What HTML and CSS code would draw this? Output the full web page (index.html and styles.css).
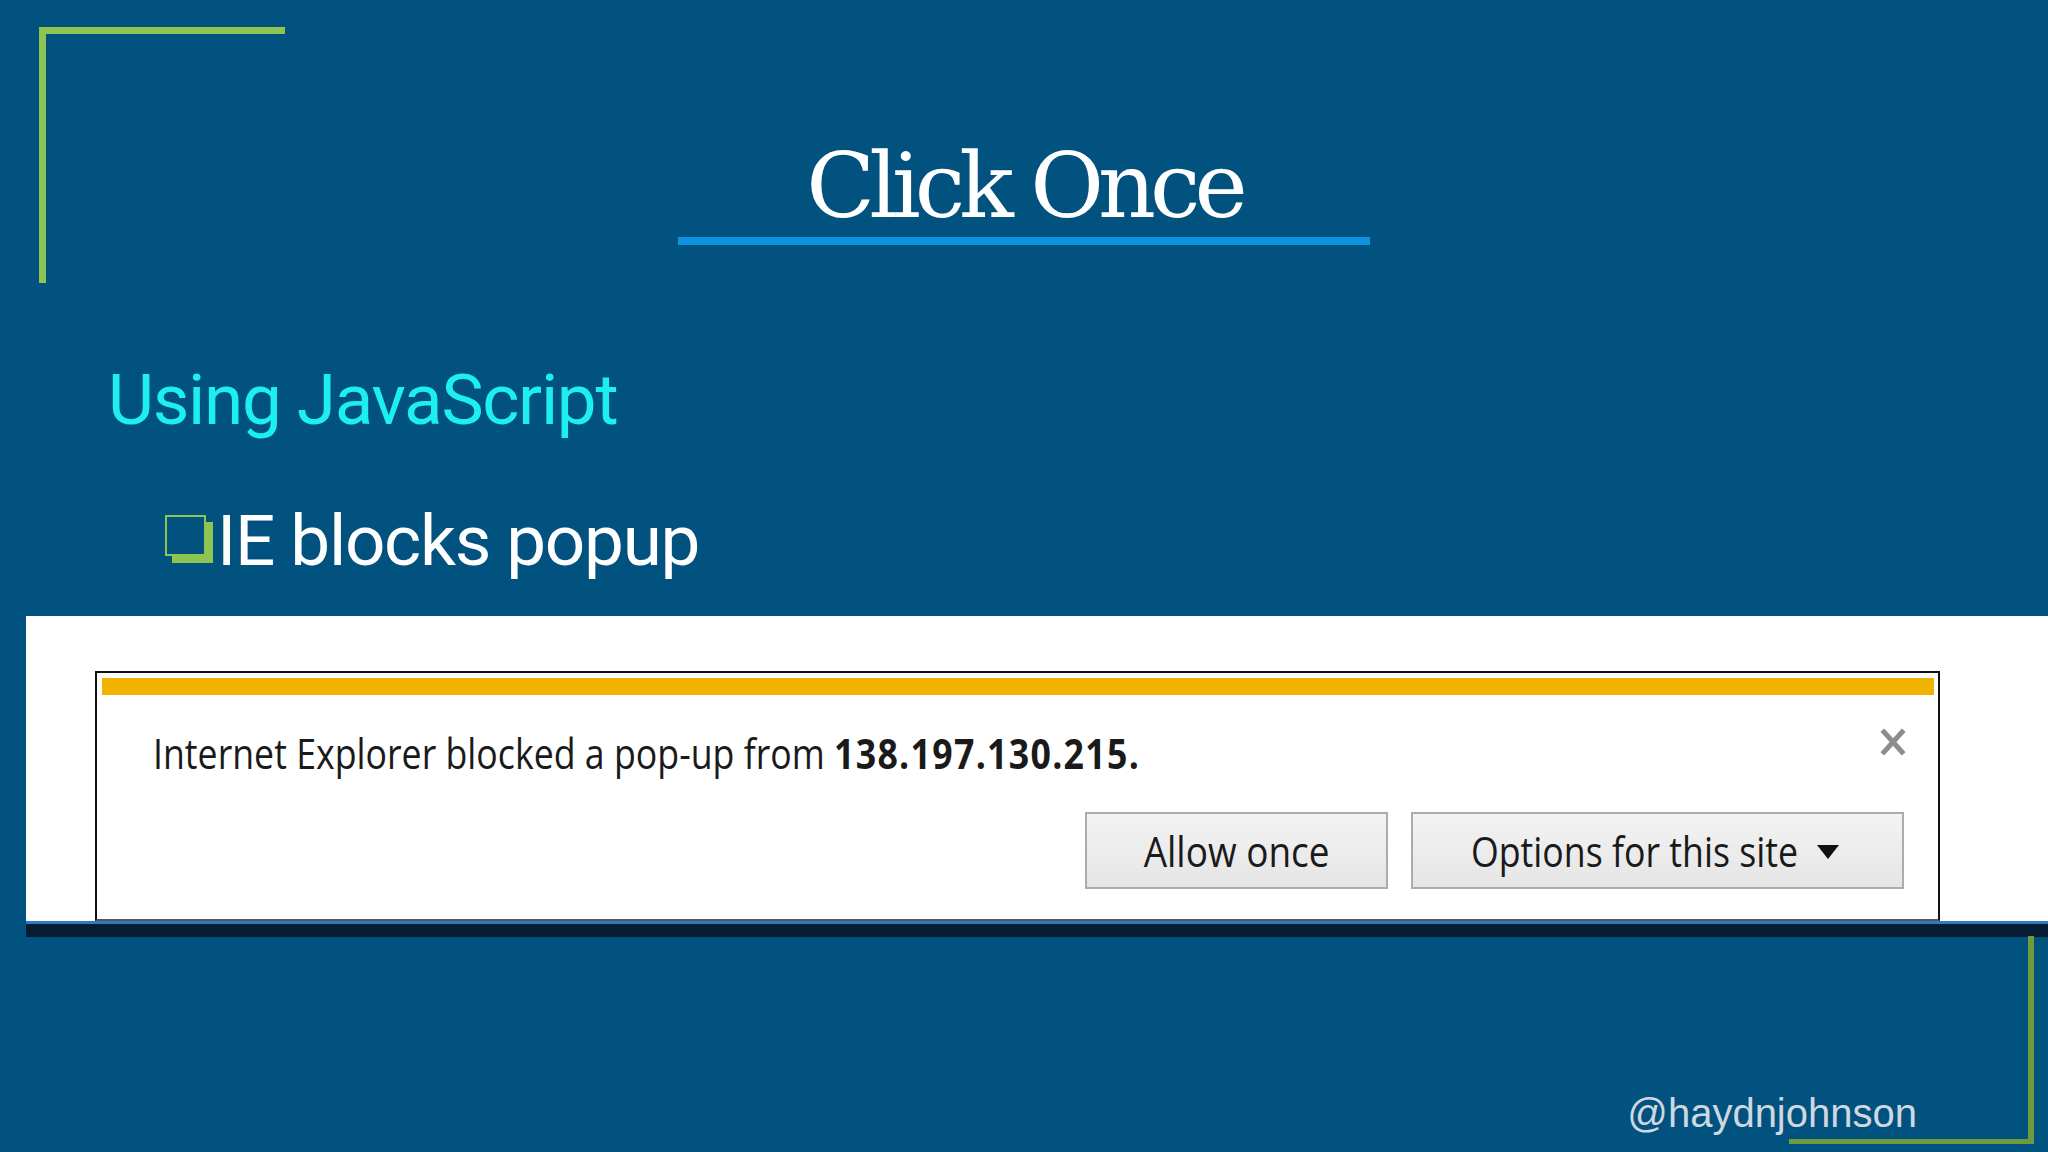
FILE: index.html
```html
<!DOCTYPE html>
<html>
<head>
    <link rel="stylesheet" href="styles.css">
</head>
<body>
    <div class="slide">
        <div class="corner corner-top"></div>

        <div class="title-block">
            <h1 class="title">Click Once</h1>
            <div class="title-rule"></div>
        </div>

        <h2 class="section">Using JavaScript</h2>

        <div class="bullet-row">
            <span class="bullet-box"></span>
            <span class="bullet-text">IE blocks popup</span>
        </div>

        <div class="shot">
            <div class="ie-bar">
                <div class="ie-stripe"></div>
                <div class="ie-body">
                    <div class="ie-message-row">
                        <div class="ie-message"><span class="narrow">Internet Explorer blocked a pop-up from <b>138.197.130.215.</b></span></div>
                        <svg class="ie-close" width="26" height="28" viewBox="0 0 26 28">
                            <path d="M4 4 L22 24 M22 4 L4 24" stroke="#8d8d8d" stroke-width="5" stroke-linecap="square"/>
                        </svg>
                    </div>
                    <div class="ie-actions">
                        <button class="ie-btn btn-allow" type="button"><span class="narrow">Allow once</span></button>
                        <button class="ie-btn btn-options" type="button">
                            <span class="narrow">Options for this site</span>
                            <svg class="caret" width="22" height="14" viewBox="0 0 22 14"><path d="M0 0 H22 L11 14 Z" fill="#111"/></svg>
                        </button>
                    </div>
                </div>
            </div>
        </div>
        <div class="shot-edge"></div>

        <div class="footer">
            <span class="handle">@haydnjohnson</span>
        </div>

        <div class="corner corner-bottom"></div>
    </div>
</body>
</html>
```

FILE: styles.css
```css
html, body {
    margin: 0;
    padding: 0;
}
body {
    background-color: #01527e;
    font-family: Roboto, 'Noto Sans', sans-serif;
    overflow: hidden;
}
.slide {
    position: relative;
    width: 2048px;
    height: 1152px;
    overflow: hidden;
}

/* green brackets */
.corner {
    position: absolute;
    box-sizing: border-box;
}
.corner-top {
    left: 39px;
    top: 27px;
    width: 246px;
    height: 256px;
    border-left: 7px solid #8cc552;
    border-top: 7px solid #8cc552;
}
.corner-bottom {
    right: 14px;
    top: 936px;
    width: 245px;
    height: 208px;
    border-right: 6px solid #6d9b3d;
    border-bottom: 5px solid #6d9b3d;
}

/* title */
.title-block {
    padding-top: 136px;
    display: flex;
    flex-direction: column;
    align-items: center;
}
.title {
    margin: 0;
    font-family: 'DejaVu Serif', 'Liberation Serif', serif;
    font-weight: normal;
    font-size: 90px;
    line-height: 100px;
    letter-spacing: -6px;
    color: #ffffff;
}
.title-rule {
    width: 692px;
    height: 8px;
    margin-top: 1px;
    background-color: #0d95de;
}

.section {
    margin: 113px 0 0 108px;
    font-weight: normal;
    font-size: 71px;
    line-height: 84px;
    letter-spacing: -1.3px;
    color: #1deef0;
}

.bullet-row {
    display: flex;
    align-items: flex-start;
    margin: 57px 0 0 165px;
}
.bullet-box {
    width: 41px;
    height: 41px;
    margin-top: 16px;
    box-sizing: border-box;
    border: 2px solid #8cc552;
    box-shadow: 7px 7px 0 #8cc552;
}
.bullet-text {
    margin-left: 11px;
    font-size: 71px;
    line-height: 84px;
    letter-spacing: -1.3px;
    color: #ffffff;
}

/* screenshot of the IE notification */
.shot {
    margin: 33px 0 0 26px;
    height: 305px;
    padding: 55px 108px 0 69px;
    box-sizing: border-box;
    background-color: #ffffff;
}
.shot-edge {
    margin-left: 26px;
    height: 16px;
    box-sizing: border-box;
    border-top: 3px solid #2b7cc4;
    background-color: #071d33;
}
.ie-bar {
    height: 250px;
    box-sizing: border-box;
    border: 2px solid #111111;
    border-bottom-color: #555555;
    padding: 5px 4px 0 5px;
    background-color: #ffffff;
    font-family: 'Open Sans', 'Noto Sans', sans-serif;
    color: #1a1a1a;
}
.ie-stripe {
    height: 17px;
    background-color: #f2b200;
}
.ie-body {
    padding: 33px 30px 0 51px;
}
.ie-message-row {
    display: flex;
    justify-content: space-between;
    align-items: flex-start;
}
.ie-message {
    font-size: 42px;
    line-height: 50px;
    white-space: nowrap;
}
.ie-message b {
    letter-spacing: 1.5px;
}
.narrow {
    display: inline-block;
    transform: scaleX(0.85);
    transform-origin: left center;
    white-space: nowrap;
}
.ie-close {
    margin-right: -2px;
}
.ie-actions {
    display: flex;
    justify-content: flex-end;
    gap: 23px;
    margin-top: 34px;
}
.ie-btn {
    height: 77px;
    box-sizing: border-box;
    border: 2px solid #acacac;
    background: linear-gradient(#f3f3f3, #e5e5e5);
    font-family: 'Open Sans', 'Noto Sans', sans-serif;
    font-size: 42px;
    color: #1a1a1a;
    display: flex;
    align-items: center;
    padding: 0;
    overflow: hidden;
}
.btn-allow {
    width: 303px;
    justify-content: center;
}
.btn-allow .narrow {
    transform: scaleX(0.88);
    transform-origin: center center;
}
.btn-options {
    width: 493px;
    justify-content: flex-start;
    padding-left: 58px;
}
.btn-options .narrow {
    margin-right: -57px;
}
.caret {
    margin-left: 18px;
    margin-top: 2px;
}

.footer {
    display: flex;
    justify-content: flex-end;
    padding: 153px 131px 0 0;
}
.handle {
    font-family: 'Liberation Sans', Arial, sans-serif;
    font-size: 40px;
    line-height: 46px;
    color: #cfd8e0;
}
```
